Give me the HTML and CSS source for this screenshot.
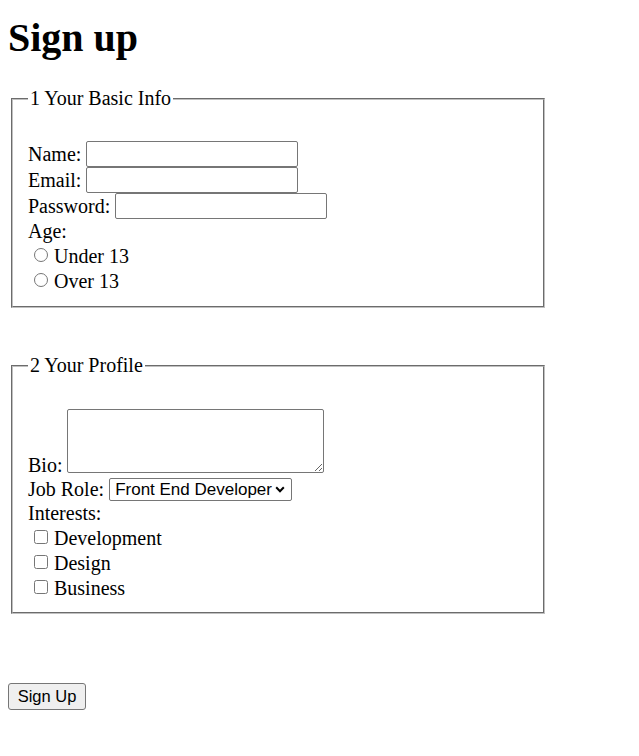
FILE: index.html
```html
<!DOCTYPE html>
<html lang="en">
<head>
<meta charset="utf-8">
<title>Sign up</title>
<link rel="stylesheet" href="styles.css">
</head>
<body>
<h1 class="title">Sign up</h1>
<form class="signup">
  <fieldset class="group group-first">
    <legend class="group-title">1 Your Basic Info</legend>
    <div class="row field"><label for="name">Name:</label><input class="text-input" id="name" type="text"></div>
    <div class="row field"><label for="email">Email:</label><input class="text-input" id="email" type="email"></div>
    <div class="row field"><label for="password">Password:</label><input class="text-input" id="password" type="password"></div>
    <div class="row plain"><span>Age:</span></div>
    <div class="row choice"><input class="tick" type="radio" id="under" name="age"><label class="choice-label" for="under">Under 13</label></div>
    <div class="row choice"><input class="tick" type="radio" id="over" name="age"><label class="choice-label" for="over">Over 13</label></div>
  </fieldset>
  <fieldset class="group group-second">
    <legend class="group-title">2 Your Profile</legend>
    <div class="row bio"><label for="bio">Bio:</label><textarea class="bio-input" id="bio"></textarea></div>
    <div class="row job"><label for="job">Job Role:</label><span class="select-wrap"><select class="job-select" id="job"><option>Front End Developer</option><option>Back End Developer</option><option>Designer</option></select><svg class="chevron" width="10" height="7" viewBox="0 0 10 7" aria-hidden="true"><polyline points="1.2,1.3 5,5.2 8.8,1.3" fill="none" stroke="#000" stroke-width="2"/></svg></span></div>
    <div class="row plain plain-tight"><span>Interests:</span></div>
    <div class="row choice"><input class="tick" type="checkbox" id="dev"><label class="choice-label" for="dev">Development</label></div>
    <div class="row choice"><input class="tick" type="checkbox" id="design"><label class="choice-label" for="design">Design</label></div>
    <div class="row choice"><input class="tick" type="checkbox" id="business"><label class="choice-label" for="business">Business</label></div>
  </fieldset>
  <div class="actions"><button class="submit" type="submit">Sign Up</button></div>
</form>
</body>
</html>
```
FILE: styles.css
```css
html, body {
  background: #ffffff;
}
body {
  margin: 0 8px;
  font-family: "Liberation Serif", "Times New Roman", serif;
  font-size: 20px;
  color: #000000;
}
.title {
  font-size: 40px;
  font-weight: bold;
  margin: 16px 0 27px;
  line-height: 44px;
}
.signup {
  display: flex;
  flex-direction: column;
  align-items: flex-start;
}
.group {
  box-sizing: border-box;
  width: 534px;
  margin: 0 0 0 3px;
  padding: 31px 15px 13px;
  border: 2px groove #c0c0c0;
  min-width: 0;
}
.group-second {
  margin-top: 46px;
  padding-bottom: 12px;
}
.group-title {
  padding: 0 2px;
  line-height: 23px;
}
.row {
  display: flex;
  align-items: center;
  gap: 5px;
  line-height: 23px;
}
.field {
  height: 26px;
}
.plain {
  height: 24px;
}
.plain-tight {
  height: 23px;
}
.choice {
  height: 25px;
  gap: 0;
  align-items: flex-start;
}
.choice-label {
  padding-top: 2px;
}
.text-input {
  box-sizing: border-box;
  width: 212px;
  height: 26px;
  margin: 0;
  padding: 1px 3px;
  border: 1px solid #767676;
  border-radius: 2px;
  font-family: "Liberation Sans", Arial, sans-serif;
  font-size: 16px;
}
.tick {
  width: 14px;
  height: 14px;
  margin: 5px 6px 0 6px;
}
.bio {
  align-items: flex-end;
  margin-top: 1px;
}
.bio-input {
  box-sizing: border-box;
  width: 257px;
  height: 64px;
  margin: 0 0 4px 0;
  padding: 2px;
  border: 1px solid #767676;
  border-radius: 2px;
  font-family: "Liberation Mono", monospace;
  font-size: 16px;
  resize: both;
}
.job {
  height: 25px;
}
.select-wrap {
  position: relative;
  display: inline-flex;
}
.job-select {
  -webkit-appearance: none;
  appearance: none;
  box-sizing: border-box;
  height: 23px;
  width: 183px;
  margin: 0;
  padding: 0 18px 0 5px;
  font-family: "Liberation Sans", Arial, sans-serif;
  font-size: 17px;
  line-height: 21px;
  border: 1px solid #767676;
  border-radius: 2px;
  background: #ffffff;
  color: #000000;
}
.chevron {
  position: absolute;
  right: 7px;
  top: 8px;
  pointer-events: none;
}
.actions {
  margin-top: 69px;
}
.submit {
  box-sizing: border-box;
  height: 27px;
  width: 78px;
  margin: 0;
  padding: 1px 8px;
  font-family: "Liberation Sans", Arial, sans-serif;
  font-size: 16.5px;
  color: #000000;
  background: #efefef;
  border: 1px solid #767676;
  border-radius: 3px;
}
```
